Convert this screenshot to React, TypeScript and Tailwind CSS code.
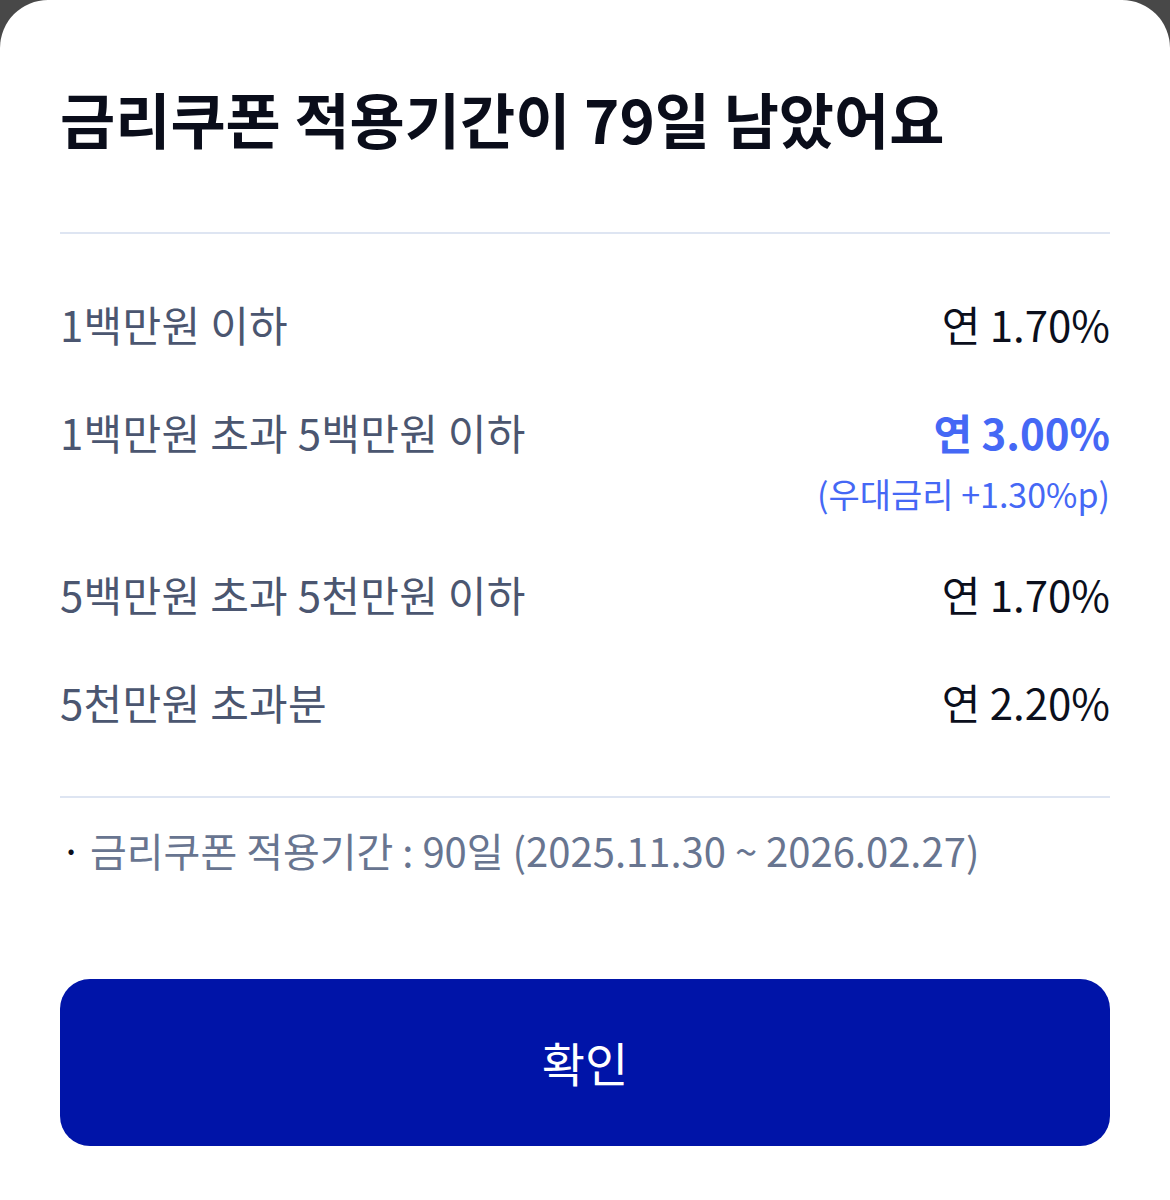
const font = { fontFamily: '"Noto Sans CJK KR", "Noto Sans", sans-serif' };

type Rate = {
    label: string;
    value: string;
    highlight?: boolean;
    note?: string;
};

const rates: Rate[] = [
    { label: "1백만원 이하", value: "연 1.70%" },
    { label: "1백만원 초과 5백만원 이하", value: "연 3.00%", highlight: true, note: "(우대금리 +1.30%p)" },
    { label: "5백만원 초과 5천만원 이하", value: "연 1.70%" },
    { label: "5천만원 초과분", value: "연 2.20%" },
];

function RateRow({ rate }: { rate: Rate }) {
    return (
        <div className="flex items-start justify-between">
            <span className="text-[42px] leading-[56px] text-[#4b5670] tracking-[0.3px]">{rate.label}</span>
            <div className="flex flex-col items-end">
                <span
                    className={
                        rate.highlight
                            ? "text-[42px] leading-[56px] font-bold text-[#4568f5]"
                            : "text-[42px] leading-[56px] text-[#0b0f1c]"
                    }
                >
                    {rate.value}
                </span>
                {rate.note && (
                    <span className="text-[34px] leading-[40px] mt-[14px] text-[#4568f5]">
                        {rate.note}
                    </span>
                )}
            </div>
        </div>
    );
}

export default function App() {
    return (
        <div className="w-[1170px] h-[1200px] bg-[#484848] overflow-hidden" style={font}>
            <div className="h-full bg-white rounded-t-[48px] px-[60px] pt-[82px] flex flex-col">
                {/* Title */}
                <h1 className="text-[60px] leading-[72px] font-bold text-[#0a0d1a]">
                    금리쿠폰 적용기간이 79일 남았어요
                </h1>

                <div className="mt-[78px] h-[2px] bg-[#dee5f2]" />

                {/* Rate table */}
                <div className="flex flex-col gap-[52px] pt-[62px] pb-[66px]">
                    {rates.map((rate) => (
                        <RateRow key={rate.label} rate={rate} />
                    ))}
                </div>

                <div className="h-[2px] bg-[#dee5f2]" />

                {/* Footnote */}
                <div className="mt-[28px] flex items-start text-[40px] leading-[48px] text-[#687590]">
                    <span className="w-[30px] text-[#0b0f1c]">·</span>
                    <span>금리쿠폰 적용기간 : 90일 (2025.11.30 ~ 2026.02.27)</span>
                </div>

                {/* Confirm button */}
                <button className="mt-[105px] h-[167px] w-full rounded-[30px] bg-[#0014a8] text-white text-[47px] font-normal">
                    확인
                </button>
            </div>
        </div>
    );
}
